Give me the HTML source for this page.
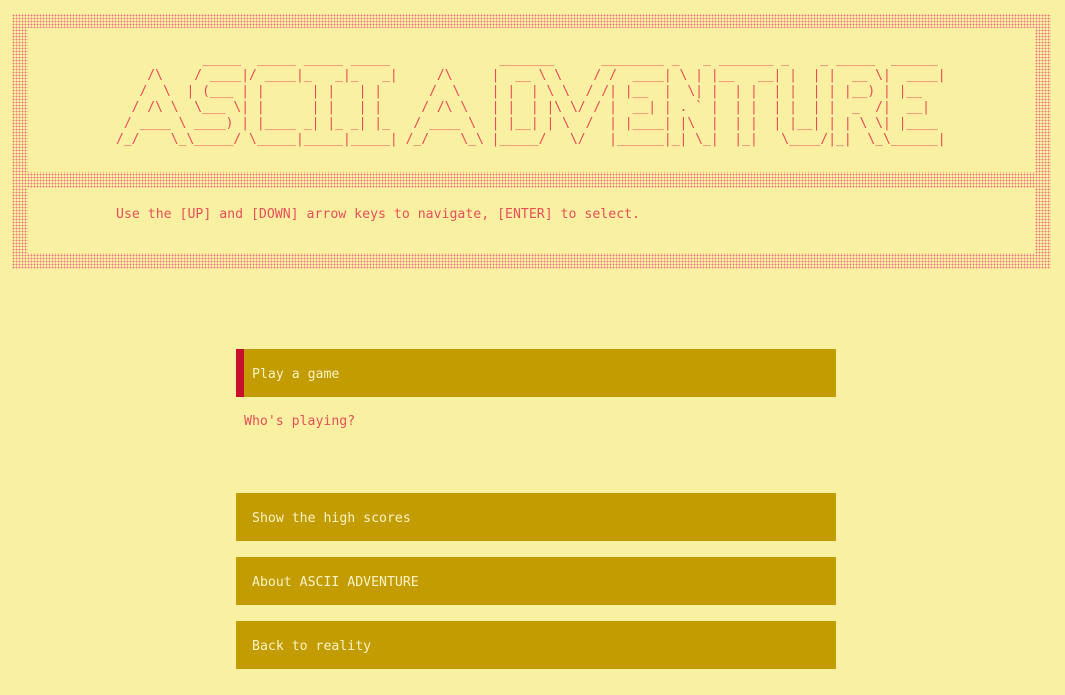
<!DOCTYPE html>
<html><head><meta charset="utf-8"><style>
html,body{margin:0;padding:0;background:#f9f0a2;width:1065px;height:695px;overflow:hidden;font-family:"DejaVu Sans Mono",monospace;}
.dots{position:absolute;background:radial-gradient(circle,#ee7080 0.75px,transparent 1px) 0 0/3px 3px,#f9f0a2;}
.box{position:absolute;background:#f9f0a2;}
pre{position:absolute;margin:0;font-family:"DejaVu Sans Mono",monospace;font-size:13px;line-height:16px;color:#ec4a58;}
.sub{position:absolute;left:116px;top:207px;font-size:13.2px;color:#e8505a;}
.item{position:absolute;left:236px;width:600px;height:48px;background:#c29c00;color:#faf2c4;font-size:13.2px;line-height:51px;box-sizing:border-box;padding-left:16px;}
.sel{border-left:8px solid #c8102e;padding-left:8px;}
.who{position:absolute;left:244px;top:414px;font-size:13.2px;color:#e8505a;}
</style></head><body>
<div class="dots" style="left:12px;top:14px;width:1039px;height:255px"></div>
<div class="box" style="left:28px;top:28px;width:1007px;height:144px"></div>
<div class="box" style="left:28px;top:188px;width:1007px;height:65px"></div>
<pre style="left:116px;top:52px">           _____  _____ _____ _____              _______      ________ _   _ _______ _    _ _____  ______ 
    /\    / ____|/ ____|_   _|_   _|     /\     |  __ \ \    / /  ____| \ | |__   __| |  | |  __ \|  ____|
   /  \  | (___ | |      | |   | |      /  \    | |  | \ \  / /| |__  |  \| |  | |  | |  | | |__) | |__   
  / /\ \  \___ \| |      | |   | |     / /\ \   | |  | |\ \/ / |  __| | . ` |  | |  | |  | |  _  /|  __|  
 / ____ \ ____) | |____ _| |_ _| |_   / ____ \  | |__| | \  /  | |____| |\  |  | |  | |__| | | \ \| |____ 
/_/    \_\_____/ \_____|_____|_____| /_/    \_\ |_____/   \/   |______|_| \_|  |_|   \____/|_|  \_\______|</pre>
<div class="sub">Use the [UP] and [DOWN] arrow keys to navigate, [ENTER] to select.</div>
<div class="item sel" style="top:349px">Play a game</div>
<div class="who">Who's playing?</div>
<div class="item" style="top:493px">Show the high scores</div>
<div class="item" style="top:557px">About ASCII ADVENTURE</div>
<div class="item" style="top:621px">Back to reality</div>
</body></html>
